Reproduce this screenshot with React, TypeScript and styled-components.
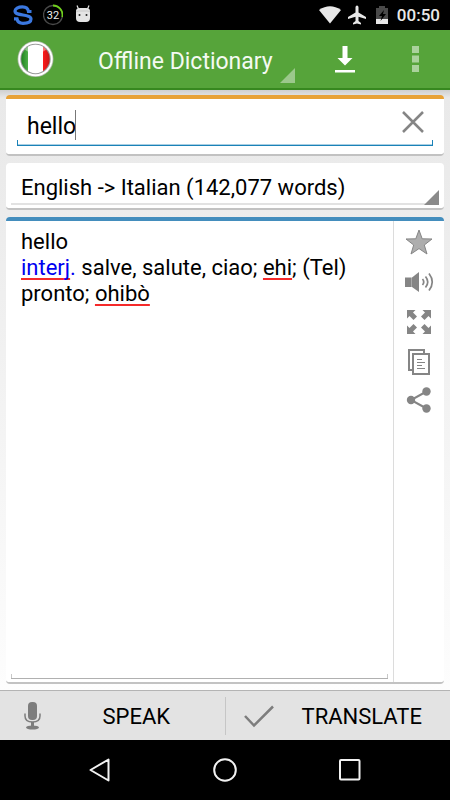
import React, { useState } from 'react';
import styled, { createGlobalStyle } from 'styled-components';

const GlobalStyle = createGlobalStyle`
  * { box-sizing: border-box; }
  body { margin: 0; background: #000; font-family: Roboto, sans-serif; font-size: 22px; color: #000; }
  button, input, select { font: inherit; color: inherit; background: none; border: 0; padding: 0; margin: 0; border-radius: 0; outline: 0; }
  button { cursor: pointer; }
  svg { display: block; flex: none; }
`;

const Screen = styled.div`
  min-height: 100vh;
  display: flex;
  flex-direction: column;
`;

const StatusBar = styled.div`
  height: 30px;
  flex: none;
  display: flex;
  align-items: center;
  padding: 0 10px 0 13px;
  background: #000;
  color: #e8e8e8;
`;

const StatusGroup = styled.div<{ $end?: boolean }>`
  display: flex;
  align-items: center;
  gap: ${(p) => (p.$end ? '6px' : '10px')};
  margin-left: ${(p) => (p.$end ? 'auto' : '0')};
`;

const Clock = styled.span`
  font-size: 17px;
  font-weight: 500;
  line-height: 32px;
`;

const Header = styled.header`
  height: 60px;
  flex: none;
  display: flex;
  align-items: center;
  padding: 0 15px 0 17px;
  background: #56a43a;
  border-bottom: 2px solid #37881f;
`;

const IconButton = styled.button<{ $width?: number; $height?: number }>`
  width: ${(p) => p.$width ?? 40}px;
  height: ${(p) => p.$height ?? 40}px;
  flex: none;
  display: flex;
  align-items: center;
  justify-content: center;
`;

const TitleMenu = styled.button`
  position: relative;
  flex: 1;
  max-width: 245px;
  height: 52px;
  padding: 4px 0 0 44px;
  font-size: 23px;
  text-align: left;
  color: #f4faf2;
  white-space: nowrap;
`;

const Corner = styled.span<{ $light?: boolean }>`
  position: absolute;
  right: ${(p) => (p.$light ? '4px' : '5px')};
  bottom: ${(p) => (p.$light ? '2px' : '3px')};
  width: 15px;
  height: 15px;
  background: ${(p) => (p.$light ? '#9cc88c' : '#8a8a8a')};
  clip-path: polygon(100% 0, 100% 100%, 0 100%);
  pointer-events: none;
`;

const HeaderActions = styled.div`
  display: flex;
  margin-left: auto;
  gap: 30px;
`;

const Content = styled.main`
  flex: 1;
  display: flex;
  flex-direction: column;
  gap: 7px;
  padding: 5px 6px 6px;
  background: linear-gradient(#cfcfcf 0, #e9e9e9 8px, #ececec 20%, #fdfdfd 100%);
`;

const Card = styled.section<{ $accent?: string; $fill?: boolean }>`
  position: relative;
  display: flex;
  flex: ${(p) => (p.$fill ? '1' : 'none')};
  background: #fff;
  border-radius: 4px;
  border-top: ${(p) => (p.$accent ? `4px solid ${p.$accent}` : '0')};
  border-bottom: 2px solid #c2c2c2;
`;

const SearchField = styled.div`
  position: relative;
  flex: 1;
  height: 47px;
  margin: 0 11px 8px;
  display: flex;
  align-items: center;
  padding-left: 10px;
  border-bottom: 1px solid #1a82b8;
  box-shadow: 0 -1px 0 #a9cfe3 inset;

  &::before, &::after {
    content: '';
    position: absolute;
    bottom: 0;
    width: 1px;
    height: 5px;
    background: #1a82b8;
  }
  &::before { left: 0; }
  &::after { right: 0; }
`;

const SearchInput = styled.input`
  flex: 1;
  min-width: 0;
  height: 32px;
  margin-top: 8px;
  font-size: 23px;
`;

const Caret = styled.span`
  position: absolute;
  left: 58px;
  top: 11px;
  width: 1px;
  height: 30px;
  background: #777;
`;

const LanguageSelect = styled.select`
  flex: 1;
  min-width: 0;
  height: 42px;
  margin: 0 5px 3px;
  padding: 9px 10px 0;
  appearance: none;
  border-bottom: 2px solid #e2e2e2;
`;

const Definition = styled.div`
  position: relative;
  flex: 1;
  margin: 0 5px 3px;
  padding: 8px 10px;
  line-height: 26px;
  border-bottom: 1px solid #b0b0b0;
  outline: 0;

  &::before, &::after {
    content: '';
    position: absolute;
    bottom: 0;
    width: 1px;
    height: 4px;
    background: #c8c8c8;
  }
  &::before { left: 0; }
  &::after { right: 0; }

  p { margin: 0; }
`;

const PartOfSpeech = styled.span`
  color: #0000f0;
`;

const Misspelled = styled.span`
  text-decoration: underline 2px #f52a2a;
  text-decoration-skip-ink: none;
  text-underline-offset: 3px;
`;

const Tools = styled.div`
  width: 51px;
  flex: none;
  display: flex;
  flex-direction: column;
  align-items: center;
  padding-top: 1px;
  border-left: 1px solid #dcdcdc;
`;

const Footer = styled.footer`
  height: 50px;
  flex: none;
  display: flex;
  align-items: center;
  background: #e3e3e3;
  border-top: 1px solid #b4b4b4;
`;

const FooterButton = styled.button`
  flex: 1;
  height: 38px;
  display: flex;
  align-items: center;
  padding: 0 16px;

  & + & { border-left: 1px solid #c6c6c6; }
`;

const FooterLabel = styled.span`
  flex: 1;
  text-align: center;
  padding: 2px 0 0 14px;
`;

const NavBar = styled.nav`
  height: 60px;
  flex: none;
  display: flex;
  align-items: center;
  justify-content: center;
  gap: 85px;
  background: #000;
`;

const GRAY = '#858585';

export default function App() {
  const [query, setQuery] = useState('hello');
  return (
    <Screen>
      <GlobalStyle />
      <StatusBar>
        <StatusGroup>
          <svg width="20" height="22" viewBox="0 0 20 22" fill="none" stroke="#3b78e0" strokeWidth="3.200">
            <path d="M18.500 7.500H15.500C15 4 12 2.800 9.500 2.800C5 2.800 2 4.800 2 7C2 9.700 5 10.200 10 11C15 11.800 18 12.500 18 15C18 18 14.500 19.300 10 19.300C6.500 19.300 4.500 18 4 14.800H1" />
          </svg>
          <svg width="20" height="22" viewBox="0 0 20 22" fill="none">
            <circle cx="10" cy="11" r="9.500" stroke="#4a4a4a" strokeWidth="1.300" />
            <path d="M10 1.500A9.500 9.500 0 0 1 19.300 13" stroke="#6fd01c" strokeWidth="1.800" />
            <text x="10" y="15" fill="#eee" fontSize="11" textAnchor="middle" fontFamily="Roboto, sans-serif">32</text>
          </svg>
          <svg width="20" height="22" viewBox="0 0 20 22">
            <path d="M5.500 5L4 1.500M14.500 5L16 1.500" stroke="#e4e4e4" strokeWidth="1.200" />
            <path d="M3 7Q3 4 7 4H13Q17 4 17 7V14Q17 18 13 18H7Q3 18 3 14Z" fill="#e4e4e4" />
            <path d="M3 8L5 7H15L17 8" stroke="#bbb" strokeWidth=".7" fill="none" />
            <circle cx="6.500" cy="11" r="1" fill="#222" />
            <circle cx="13.500" cy="11" r="1" fill="#222" />
          </svg>
        </StatusGroup>
        <StatusGroup $end>
          <svg width="22" height="18" viewBox="0 0 22 18"><path d="M0 4Q11-3.500 22 4L11 17.500Z" fill="#e8e8e8" /></svg>
          <svg width="20" height="20" viewBox="0 0 20 20"><path d="M10 .5C11 .5 11.500 1.500 11.500 2.500V7.500L19 12V14L11.500 11.700V16L14 18V19.500L10 18.500L6 19.500V18L8.500 16V11.700L1 14V12L8.500 7.500V2.500C8.500 1.500 9 .5 10 .5Z" fill="#e8e8e8" /></svg>
          <svg width="18" height="20" viewBox="0 0 18 20">
            <path d="M3 3H6V1H12V3H15V14H3Z" fill="#4a4a4a" />
            <path d="M3 14H15V19H3Z" fill="#e8e8e8" />
            <path d="M11 5L6 11H9L7.500 16L13 9H10Z" fill="#000" />
          </svg>
          <Clock>00:50</Clock>
        </StatusGroup>
      </StatusBar>

      <Header>
        <IconButton $width={37} aria-label="Italian">
          <svg width="37" height="38" viewBox="0 0 37 38">
            <defs>
              <clipPath id="flag"><circle cx="18.500" cy="19" r="14.200" /></clipPath>
              <linearGradient id="green" x1="0" x2="1"><stop offset="0" stopColor="#157a15" /><stop offset="1" stopColor="#4eae48" /></linearGradient>
              <linearGradient id="red" x1="0" x2="1"><stop offset="0" stopColor="#ff1a1a" /><stop offset="1" stopColor="#b81818" /></linearGradient>
            </defs>
            <circle cx="18.500" cy="19" r="18" fill="#a9b8a4" />
            <circle cx="18.500" cy="19" r="17.200" fill="#fff" />
            <circle cx="18.500" cy="19" r="15.200" fill="#999" />
            <g clipPath="url(#flag)">
              <path d="M3 0H11V38H3Z" fill="url(#green)" />
              <path d="M11 0H26V38H11Z" fill="#fff" />
              <path d="M26 0H34V38H26Z" fill="url(#red)" />
              <ellipse cx="18.500" cy="8" rx="11" ry="5" fill="#fff" opacity=".4" />
            </g>
          </svg>
        </IconButton>
        <TitleMenu aria-haspopup="menu">Offline Dictionary<Corner $light /></TitleMenu>
        <HeaderActions>
          <IconButton aria-label="Download">
            <svg width="20" height="28" viewBox="0 0 20 28" fill="#fff"><path d="M7.500 1H12.500V13H17.500L10 20.500L2.500 13H7.500ZM0 25H20V27.500H0Z" /></svg>
          </IconButton>
          <IconButton aria-label="More options">
            <svg width="7" height="26" viewBox="0 0 7 26" fill="#aad29c"><path d="M0 0H7V7H0ZM0 9.500H7V16.500H0ZM0 19H7V26H0Z" /></svg>
          </IconButton>
        </HeaderActions>
      </Header>

      <Content>
        <Card $accent="#e8a237">
          <SearchField>
            <SearchInput aria-label="Search word" value={query} onChange={(e) => setQuery(e.target.value)} />
            <Caret />
            <IconButton aria-label="Clear">
              <svg width="22" height="22" viewBox="0 0 22 22" stroke="#858585" strokeWidth="2.500"><path d="M1 1L21 21M21 1L1 21" /></svg>
            </IconButton>
          </SearchField>
        </Card>

        <Card>
          <LanguageSelect aria-label="Dictionary">
            <option>English -&gt; Italian (142,077 words)</option>
          </LanguageSelect>
          <Corner />
        </Card>

        <Card $accent="#438dbd" $fill>
          <Definition role="textbox" aria-label="Definition" aria-multiline="true" tabIndex={0}>
            <p>hello</p>
            <p>
              <PartOfSpeech><Misspelled>interj</Misspelled>.</PartOfSpeech> salve, salute, ciao; <Misspelled>ehi</Misspelled>; (Tel) pronto; <Misspelled>ohibò</Misspelled>
            </p>
          </Definition>
          <Tools>
            <IconButton aria-label="Favorite">
              <svg width="28" height="28" viewBox="0 0 28 28"><path d="M14 2L17.200 10.800L27 11L19.300 17L22 26L14 20.600L6 26L8.700 17L1 11L10.800 10.800Z" fill="#aeaeae" stroke="#858585" /></svg>
            </IconButton>
            <IconButton aria-label="Listen">
              <svg width="30" height="24" viewBox="0 0 30 24" fill="none" stroke={GRAY} strokeWidth="2">
                <path d="M1 7.500H7V17H1Z" fill={GRAY} stroke="none" />
                <path d="M8 7.500L15 2V22L8 17Z" fill={GRAY} stroke="none" />
                <path d="M7.500 7.500V17" stroke="#aaa" strokeWidth="1" />
                <path d="M18.500 9Q21 12 18.500 15M21.500 6.500Q26 12 21.500 17.500M25 3.500Q31.500 12 25 20.500" strokeWidth="1.700" />
              </svg>
            </IconButton>
            <IconButton aria-label="Full screen">
              <svg width="24" height="24" viewBox="0 0 24 24" fill={GRAY}>
                <path id="arrow" d="M0 0H8.500L6 2.500L10 6.500L6.500 10L2.500 6L0 8.500Z" />
                <use href="#arrow" transform="translate(24 0) scale(-1 1)" />
                <use href="#arrow" transform="translate(0 24) scale(1 -1)" />
                <use href="#arrow" transform="translate(24 24) scale(-1 -1)" />
              </svg>
            </IconButton>
            <IconButton aria-label="Copy">
              <svg width="24" height="28" viewBox="0 0 24 28" fill="none" stroke={GRAY} strokeWidth="2">
                <path d="M5 22H2V2H17V5" />
                <path d="M6 6H22V26H6Z" fill="#fff" />
                <path d="M10 11.500H15M10 14.500H18M10 17.500H15M10 20.500H18" strokeWidth="1" />
              </svg>
            </IconButton>
            <IconButton aria-label="Share" $height={36}>
              <svg width="26" height="26" viewBox="0 0 26 26" fill={GRAY}>
                <path d="M20.500 4.500L5 13L20.500 21.500" fill="none" stroke={GRAY} strokeWidth="2" />
                <circle cx="20.500" cy="4.500" r="4.200" /><circle cx="5" cy="13" r="4.200" /><circle cx="20.500" cy="21.500" r="4.200" />
              </svg>
            </IconButton>
          </Tools>
        </Card>
      </Content>

      <Footer>
        <FooterButton>
          <svg width="34" height="30" viewBox="0 0 34 30" fill="none" stroke="#7d7d7d">
            <rect x="12" y="1" width="9" height="18" rx="4" fill="#7d7d7d" stroke="none" />
            <path d="M9 12.500V15Q9 21 16.500 21Q24 21 24 15V12.500" strokeWidth="1.500" />
            <path d="M16.500 21V26" strokeWidth="3" />
            <ellipse cx="16.500" cy="26.500" rx="6.500" ry="2" fill="#7d7d7d" stroke="none" />
          </svg>
          <FooterLabel>SPEAK</FooterLabel>
        </FooterButton>
        <FooterButton>
          <svg width="34" height="26" viewBox="0 0 34 26" fill="none" stroke="#7d7d7d" strokeWidth="2.500"><path d="M3 13L12 22.500L31 3.500" /></svg>
          <FooterLabel>TRANSLATE</FooterLabel>
        </FooterButton>
      </Footer>

      <NavBar>
        <IconButton aria-label="Back">
          <svg width="24" height="26" viewBox="0 0 24 26" fill="none" stroke="#f2f2f2" strokeWidth="2" strokeLinejoin="round"><path d="M20.500 2.500V23.500L2.500 13Z" /></svg>
        </IconButton>
        <IconButton aria-label="Home">
          <svg width="26" height="26" viewBox="0 0 26 26" fill="none" stroke="#f2f2f2" strokeWidth="2"><circle cx="13" cy="13" r="10.800" /></svg>
        </IconButton>
        <IconButton aria-label="Recent apps">
          <svg width="24" height="24" viewBox="0 0 24 24" fill="none" stroke="#f2f2f2" strokeWidth="2"><rect x="2" y="2" width="19.500" height="19.500" rx="1" /></svg>
        </IconButton>
      </NavBar>
    </Screen>
  );
}
